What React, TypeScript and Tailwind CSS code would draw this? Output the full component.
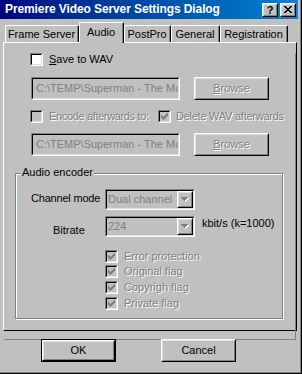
import React from 'react';

const etched = 'text-[#808080] [text-shadow:1px_1px_0_#fff]';

const Raised = ({ className = '', children }: { className?: string; children?: React.ReactNode }) => (
  <div className={`border border-t-white border-l-white border-r-black border-b-black bg-[#c0c0c0] ${className}`}>
    <div className="w-full h-full border border-t-[#dfdfdf] border-l-[#dfdfdf] border-r-[#808080] border-b-[#808080] flex items-center justify-center">
      {children}
    </div>
  </div>
);

const Sunken = ({ className = '', inner = '', children }: { className?: string; inner?: string; children?: React.ReactNode }) => (
  <div className={`border border-t-[#808080] border-l-[#808080] border-r-white border-b-white ${className}`}>
    <div className={`w-full h-full border border-t-black border-l-black border-r-[#dfdfdf] border-b-[#dfdfdf] ${inner}`}>
      {children}
    </div>
  </div>
);

const CheckMark = ({ color }: { color: string }) => (
  <svg width="7" height="7" viewBox="0 0 7 7" shapeRendering="crispEdges" fill={color}>
    <rect x="6" y="0" width="1" height="1" />
    <rect x="5" y="1" width="2" height="1" />
    <rect x="0" y="2" width="1" height="1" />
    <rect x="4" y="2" width="3" height="1" />
    <rect x="0" y="3" width="2" height="1" />
    <rect x="3" y="3" width="3" height="1" />
    <rect x="0" y="4" width="5" height="1" />
    <rect x="1" y="5" width="3" height="1" />
    <rect x="2" y="6" width="1" height="1" />
  </svg>
);

const Checkbox = ({ checked = false, disabled = false }: { checked?: boolean; disabled?: boolean }) => (
  <Sunken
    className="w-[13px] h-[13px] shrink-0"
    inner={`flex items-center justify-center ${disabled ? 'bg-[#c0c0c0]' : 'bg-white'}`}
  >
    {checked && <CheckMark color={disabled ? '#808080' : '#000'} />}
  </Sunken>
);

const DownArrow = () => (
  <svg width="8" height="5" viewBox="0 0 8 5" shapeRendering="crispEdges">
    <g fill="#fff" transform="translate(1 1)">
      <rect x="0" y="0" width="7" height="1" />
      <rect x="1" y="1" width="5" height="1" />
      <rect x="2" y="2" width="3" height="1" />
      <rect x="3" y="3" width="1" height="1" />
    </g>
    <g fill="#808080">
      <rect x="0" y="0" width="7" height="1" />
      <rect x="1" y="1" width="5" height="1" />
      <rect x="2" y="2" width="3" height="1" />
      <rect x="3" y="3" width="1" height="1" />
    </g>
  </svg>
);

const CloseGlyph = () => (
  <svg width="8" height="7" viewBox="0 0 8 7" shapeRendering="crispEdges" fill="#000">
    <rect x="0" y="0" width="2" height="1" />
    <rect x="6" y="0" width="2" height="1" />
    <rect x="1" y="1" width="2" height="1" />
    <rect x="5" y="1" width="2" height="1" />
    <rect x="2" y="2" width="4" height="1" />
    <rect x="3" y="3" width="2" height="1" />
    <rect x="2" y="4" width="4" height="1" />
    <rect x="1" y="5" width="2" height="1" />
    <rect x="5" y="5" width="2" height="1" />
    <rect x="0" y="6" width="2" height="1" />
    <rect x="6" y="6" width="2" height="1" />
  </svg>
);

const Tab = ({ label, className, selected = false }: { label: string; className: string; selected?: boolean }) => (
  <div
    className={`${className} ${selected ? 'h-[21px] -mb-px relative z-10' : 'h-[17px]'} border-t border-l border-r border-t-white border-l-white border-r-black rounded-t-[2px] bg-[#c0c0c0]`}
  >
    <div className={`h-full border-r border-r-[#808080] flex justify-center ${selected ? 'items-start pt-[3px]' : 'items-center'}`}>
      {label}
    </div>
  </div>
);

// path field, text clipped by the box like the original control
const PathBox = () => (
  <Sunken className="w-[149px] h-[23px]" inner="flex items-center pl-[3px] overflow-hidden">
    <span className="block w-full overflow-hidden whitespace-nowrap text-[#808080]">{'C:\\TEMP\\Superman - The Movie'}</span>
  </Sunken>
);

const BrowseButton = () => (
  <Raised className="w-[75px] h-[23px] ml-[14px]">
    <span className={etched}>
      <span className="underline">B</span>rowse
    </span>
  </Raised>
);

const Combo = ({ value }: { value: string }) => (
  <Sunken className="w-[90px] h-[21px] shrink-0" inner="flex items-center bg-[#c0c0c0]">
    <span className="flex-1 pl-[1px] text-[#808080] whitespace-nowrap overflow-hidden">{value}</span>
    <Raised className="w-[16px] h-[17px] shrink-0">
      <DownArrow />
    </Raised>
  </Sunken>
);

const FlagRow = ({ label, className }: { label: string; className: string }) => (
  <div className={`flex items-center h-[13px] pl-[89px] ${className}`}>
    <Checkbox checked disabled />
    <span className={`ml-[6px] ${etched}`}>{label}</span>
  </div>
);

export default function App() {
  return (
    <div className="w-[302px] h-[374px] bg-[#c0c0c0] border-r border-b border-r-black border-b-black font-['Liberation_Sans',Arial,sans-serif] text-[11px] leading-[13px] text-black select-none">
      <div className="h-full border-r border-b border-r-[#808080] border-b-[#808080] flex flex-col">
        {/* caption */}
        <div className="h-[19px] mr-[2px] bg-gradient-to-r from-[#000080] to-[#1084d0] flex items-center pl-[5px] pr-[2px]">
          <span className="text-white font-bold text-[12px] tracking-[-0.1px] whitespace-nowrap">Premiere Video Server Settings Dialog</span>
          <div className="ml-auto flex gap-[1px]">
            <Raised className="w-[16px] h-[14px]">
              <span className="font-bold text-[11px] leading-[10px]">?</span>
            </Raised>
            <Raised className="w-[16px] h-[14px] ml-[1px]">
              <CloseGlyph />
            </Raised>
          </div>
        </div>

        {/* tabs */}
        <div className="mt-[3px] h-[20px] flex items-end pl-[5px]">
          <Tab label="Frame Server" className="w-[74px]" />
          <Tab label="Audio" className="w-[45px]" selected />
          <Tab label="PostPro" className="w-[47px]" />
          <Tab label="General" className="w-[49px]" />
          <Tab label="Registration" className="w-[68px]" />
        </div>

        {/* tab page */}
        <div className="mx-[3px] h-[289px] border border-t-white border-l-white border-r-black border-b-black">
          <div className="h-full border-r border-b border-r-[#808080] border-b-[#808080]">
            <div className="mt-[10px] ml-[26px] flex items-center h-[13px]">
              <Checkbox />
              <span className="ml-[6px]">
                <span className="underline">S</span>ave to WAV
              </span>
            </div>

            <div className="mt-[11px] ml-[27px] flex">
              <PathBox />
              <BrowseButton />
            </div>

            <div className="mt-[10px] ml-[26px] flex items-center h-[13px]">
              <Checkbox disabled />
              <span className={`ml-[6px] w-[109px] whitespace-nowrap tracking-[-0.35px] ${etched}`}>Encode afterwards to:</span>
              <Checkbox checked disabled />
              <span className={`ml-[5px] whitespace-nowrap tracking-[-0.25px] ${etched}`}>Delete WAV afterwards</span>
            </div>

            <div className="mt-[10px] ml-[27px] flex">
              <PathBox />
              <BrowseButton />
            </div>

            {/* group box */}
            <div className="relative mt-[17px] ml-[11px] w-[268px] h-[146px] border border-[#808080] shadow-[1px_1px_0_#fff,inset_1px_1px_0_#fff]">
              <span className="absolute left-[5px] -top-[8px] px-px bg-[#c0c0c0]">Audio encoder</span>

              <div className="mt-[15px] flex items-center h-[21px]">
                <span className="w-[89px] pl-[15px] pb-[3px] whitespace-nowrap tracking-[-0.2px]">Channel mode</span>
                <Combo value="Dual channel" />
              </div>

              <div className="mt-[6px] flex h-[21px]">
                <span className="w-[89px] pl-[37px] pt-[8px]">Bitrate</span>
                <Combo value="224" />
                <span className="ml-[7px] pt-px whitespace-nowrap">kbit/s (k=1000)</span>
              </div>

              <FlagRow label="Error protection" className="mt-[13px]" />
              <FlagRow label="Original flag" className="mt-[2px]" />
              <FlagRow label="Copyrigh flag" className="mt-[3px]" />
              <FlagRow label="Private flag" className="mt-[3px]" />
            </div>
          </div>
        </div>

        {/* dialog buttons */}
        <div className="mt-[8px] flex">
          <div className="ml-[41px] w-[75px] h-[23px] border border-black">
            <Raised className="w-full h-full">OK</Raised>
          </div>
          <Raised className="ml-[45px] w-[75px] h-[23px]">Cancel</Raised>
        </div>
      </div>
    </div>
  );
}
